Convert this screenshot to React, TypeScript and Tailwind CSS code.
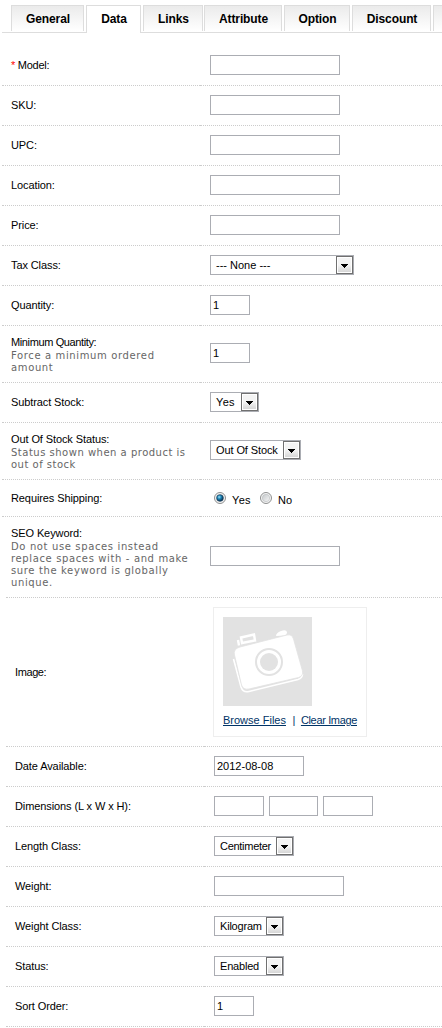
import type { ReactNode } from "react";

const tabs = [
  { label: "General", size: "w-[73px]" },
  { label: "Data", size: "w-[55px]", selected: true },
  { label: "Links", size: "w-[60px]", gap: "mr-px" },
  { label: "Attribute", size: "w-[78px]" },
  { label: "Option", size: "w-[66px]" },
  { label: "Discount", size: "w-[79px]" },
  { label: "", size: "w-[60px]" },
];

function Tabs() {
  return (
    <nav className="ml-0.5 flex h-7 border-b border-[#dddddd] pl-[9px] font-bold text-[12px] leading-none tracking-[-0.1px]">
      {tabs.map((tab, i) => (
        <a
          key={i}
          className={`${tab.size} ${tab.gap ?? "mr-0.5"} ${
            tab.selected
              ? "h-7 bg-white"
              : "h-[26px] bg-linear-to-b from-[#ebebeb] to-white"
          } flex shrink-0 justify-center border border-b-0 border-[#dddddd] pt-[7px] pl-px`}
        >
          {tab.label}
        </a>
      ))}
    </nav>
  );
}

type RowProps = {
  label: string;
  help?: string[];
  required?: boolean;
  size?: string;
  line?: string;
  tracking?: string;
  helpTracking?: string;
  children: ReactNode;
};

function Row({
  label,
  help,
  required,
  size = "h-10",
  line = "border-b",
  tracking = "tracking-[-0.1px]",
  helpTracking = "tracking-[0.63px]",
  children,
}: RowProps) {
  return (
    <div className={`flex ${size}`}>
      <div className={`flex w-[198px] shrink-0 flex-col justify-center border-dotted border-[#cccccc] pl-[9px] ${line}`}>
        <div className={`h-[13px] leading-[13px] whitespace-nowrap ${tracking}`}>
          {required && <span className="text-[#ff0000]">* </span>}
          {label}
        </div>
        {help?.map((text) => (
          <div
            key={text}
            className={`h-3 font-[Verdana,'DejaVu_Sans',sans-serif] text-[10px] leading-[13px] whitespace-nowrap text-[#666666] ${helpTracking}`}
          >
            {text}
          </div>
        ))}
      </div>
      <div className={`flex grow items-center border-dotted border-[#cccccc] pl-2.5 ${line}`}>{children}</div>
    </div>
  );
}

function Field({ size = "w-[130px]", value = "" }: { size?: string; value?: string }) {
  return (
    <input
      type="text"
      defaultValue={value}
      className={`-mt-0.5 h-5 shrink-0 border border-[#abadb3] bg-white px-[2px] outline-none ${size}`}
    />
  );
}

function Select({
  size,
  value,
  tracking = "tracking-[-0.2px]",
}: {
  size: string;
  value: string;
  tracking?: string;
}) {
  return (
    <div className={`-mt-0.5 flex h-5 items-center justify-between border border-[#abadb3] bg-white pl-[5px] ${size}`}>
      <span className={`pt-px whitespace-nowrap ${tracking}`}>{value}</span>
      <span className="flex h-[18px] w-[17px] shrink-0 items-center justify-center border border-[#707070] bg-linear-to-b from-[#f4f4f4] from-50% to-[#d2d2d2] inset-ring inset-ring-white">
        <svg width="7" height="4" viewBox="0 0 7 4" className="mt-0.5" shapeRendering="crispEdges">
          <path d="M0 0h7v1H6v1H5v1H4v1H3V3H2V2H1V1H0z" fill="#000" />
        </svg>
      </span>
    </div>
  );
}

function Radio({ checked }: { checked?: boolean }) {
  return (
    <svg width="12" height="12" viewBox="0 0 12 12">
      <defs>
        <radialGradient id="dot" cx="0.38" cy="0.35" r="0.65">
          <stop offset="0" stopColor="#9fe3fa" />
          <stop offset="0.45" stopColor="#1b86b8" />
          <stop offset="1" stopColor="#0b2c4c" />
        </radialGradient>
        <linearGradient id="well" x2="1" y2="1">
          <stop offset="0" stopColor="#c4c8cb" />
          <stop offset="1" stopColor="#f7f7f7" />
        </linearGradient>
      </defs>
      <circle cx="6" cy="6" r="5.5" fill="#f6f6f6" stroke="#8e8f8f" />
      <circle cx="6" cy="6" r="3.7" fill="url(#well)" stroke="#b9bcbe" strokeWidth="0.6" />
      {checked && <circle cx="6" cy="6" r="3.3" fill="url(#dot)" stroke="#123c5c" strokeWidth="0.6" />}
    </svg>
  );
}

function Camera() {
  return (
    <svg width="89" height="89" viewBox="0 0 89 89" className="block">
      <rect width="89" height="89" fill="#e2e2e2" />
      <path d="M16 28.500 15 23M19 26 18 20.500 31 17.500 32 23.500Z" fill="none" stroke="#fff" strokeWidth="2.4" />
      <path d="M53 19q0-3 5-5t6 1q0 3-3 3.500Z" fill="#fff" />
      <path
        d="M10.500 42 18 70Q20 76 26 74.500L75 62.500Q79.500 61 79.500 57"
        fill="none"
        stroke="#fff"
        strokeWidth="1.6"
      />
      <path
        d="M17 30 64 18Q69 17 70.500 22L79.500 54Q80.500 59 75.500 60.500L26 72Q20 73 18.500 68L11.500 38Q10 32 17 30Z"
        fill="#fff"
        stroke="#e2e2e2"
        strokeWidth="0.8"
      />
      <circle cx="46" cy="45" r="13" fill="none" stroke="#e2e2e2" strokeWidth="2" />
      <circle cx="46" cy="45" r="9" fill="#e2e2e2" />
    </svg>
  );
}

export default function App() {
  return (
    <main className="h-[1028px] w-[442px] overflow-hidden bg-white pt-[5px] font-['Liberation_Sans',Arial,sans-serif] text-[11px] leading-[13px] text-black">
      <Tabs />
      <section className="mt-[13px] ml-0.5">
        <Row label="Model:" required tracking="tracking-[-0.25px]"><Field /></Row>
        <Row label="SKU:"><Field /></Row>
        <Row label="UPC:"><Field /></Row>
        <Row label="Location:"><Field /></Row>
        <Row label="Price:"><Field /></Row>
        <Row label="Tax Class:"><Select size="w-36" value="--- None ---" tracking="tracking-[0px]" /></Row>
        <Row label="Quantity:"><Field size="w-10" value="1" /></Row>
        <Row
          label="Minimum Quantity:"
          help={["Force a minimum ordered", "amount"]}
          size="h-[57px]"
          tracking="tracking-[-0.38px]"
        >
          <Field size="w-10" value="1" />
        </Row>
        <Row label="Subtract Stock:"><Select size="w-[49px]" value="Yes" tracking="tracking-[0.3px]" /></Row>
        <Row
          label="Out Of Stock Status:"
          help={["Status shown when a product is", "out of stock"]}
          size="h-[57px]"
          helpTracking="tracking-[0.5px]"
        >
          <Select size="w-[91px]" value="Out Of Stock" tracking="tracking-[-0.1px]" />
        </Row>
        <Row label="Requires Shipping:" size="h-[37px]">
          <label className="ml-1 flex w-[46px] items-center gap-1.5">
            <Radio checked />
            <span className="pt-1 tracking-[0.3px]">Yes</span>
          </label>
          <label className="flex items-center gap-1.5">
            <Radio />
            <span className="pt-1">No</span>
          </label>
        </Row>
        <Row
          label="SEO Keyword:"
          help={["Do not use spaces instead", "replace spaces with - and make", "sure the keyword is globally", "unique."]}
          size="h-20"
          line=""
        >
          <Field />
        </Row>
      </section>
      <section className="ml-1.5 border-t border-dotted border-[#cccccc]">
        <Row label="Image:" size="h-[149px]" tracking="tracking-[-0.4px]">
          <div className="-ml-px h-[130px] w-[154px] border border-[#eeeeee] p-[9px]">
            <Camera />
            <div className="mt-2 flex whitespace-nowrap text-[#003366]">
              <a className="w-16 underline">Browse Files</a>
              <span className="w-[14px] text-center">|</span>
              <a className="tracking-[-0.35px] underline">Clear Image</a>
            </div>
          </div>
        </Row>
        <Row label="Date Available:"><Field size="w-[90px]" value="2012-08-08" /></Row>
        <Row label="Dimensions (L x W x H):">
          <div className="flex gap-[5px]">
            <Field size="w-[50px]" />
            <Field size="w-[49px]" />
            <Field size="w-[50px]" />
          </div>
        </Row>
        <Row label="Length Class:"><Select size="w-20" value="Centimeter" tracking="tracking-[-0.28px]" /></Row>
        <Row label="Weight:"><Field /></Row>
        <Row label="Weight Class:"><Select size="w-[70px]" value="Kilogram" /></Row>
        <Row label="Status:"><Select size="w-[70px]" value="Enabled" /></Row>
        <Row label="Sort Order:"><Field size="w-10" value="1" /></Row>
      </section>
    </main>
  );
}
